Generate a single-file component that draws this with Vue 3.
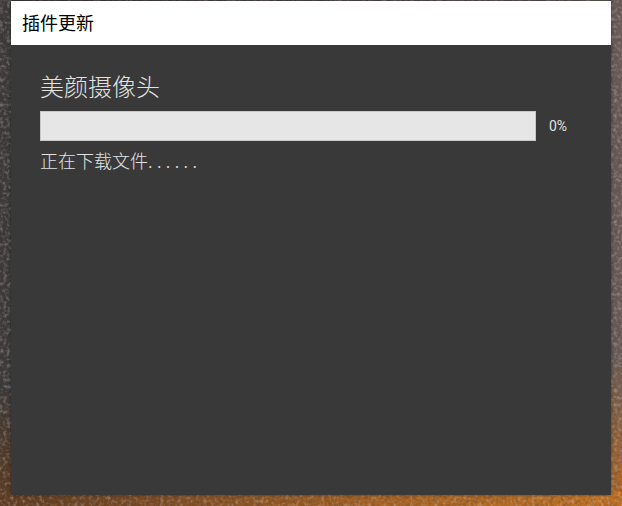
<script setup>
const percent = 0
</script>

<template>
  <div class="desktop">
    <svg class="grain" aria-hidden="true">
      <filter id="grain-filter">
        <feTurbulence type="fractalNoise" baseFrequency="0.28" numOctaves="2" seed="7" />
        <feColorMatrix type="matrix" values="0 0 0 0 0.08  0 0 0 0 0.06  0 0 0 0 0.06  2.4 0 0 0 -0.9" />
      </filter>
      <filter id="light-filter">
        <feTurbulence type="fractalNoise" baseFrequency="0.28" numOctaves="2" seed="13" />
        <feColorMatrix type="matrix" values="0 0 0 0 0.6  0 0 0 0 0.56  0 0 0 0 0.54  2.4 0 0 0 -1.1" />
      </filter>
      <rect width="100%" height="100%" filter="url(#grain-filter)" />
      <rect width="100%" height="100%" filter="url(#light-filter)" />
    </svg>
    <section class="dialog">
      <header class="dialog-header">插件更新</header>
      <div class="dialog-body">
        <h1 class="plugin-name">美颜摄像头</h1>
        <div class="progress-row">
          <div class="progress-track">
            <div class="progress-fill" :style="{ width: percent + '%' }"></div>
          </div>
          <span class="progress-value">{{ percent }}%</span>
        </div>
        <p class="status">正在下载文件<span class="dots">......</span></p>
      </div>
    </section>
  </div>
</template>

<style>
html, body { margin: 0; padding: 0; }
</style>

<style scoped>
.desktop {
  position: relative;
  box-sizing: border-box;
  width: 622px;
  height: 506px;
  padding: 1px 11px 11px;
  overflow: hidden;
  background:
    linear-gradient(to right, #5e3a1e 0, #7d4a20 25%, #a8621f 60%, #c4721f 100%) 0 100% / 100% 14px no-repeat,
    linear-gradient(to bottom, rgba(150, 95, 40, 0) 0, #b8691f 100%) 100% 100% / 14px 150px no-repeat,
    linear-gradient(to bottom, rgba(90, 55, 30, 0) 0, #5e3a1e 100%) 0 100% / 14px 120px no-repeat,
    linear-gradient(to right, #3a3838 0, #3a3838 4%, #5c5250 90%, #6a5c58 100%);
  font-family: "Noto Sans CJK SC", "Liberation Sans", sans-serif;
}
.grain {
  position: absolute;
  inset: 0;
  width: 100%;
  height: 100%;
  opacity: 0.4;
}
.dialog {
  position: relative;
  display: flex;
  flex-direction: column;
  width: 600px;
  height: 494px;
  background: #393939;
  box-shadow: 0 0 3px rgba(0, 0, 0, 0.45);
}
.dialog-header {
  flex: none;
  box-sizing: border-box;
  height: 44px;
  padding: 8px 0 0 11px;
  background: #fff;
  color: #000;
  font-size: 18px;
  line-height: 26px;
}
.dialog-body {
  flex: 1;
  display: flex;
  flex-direction: column;
  padding: 26px 29px 0;
  color: #e2e2e2;
  font-weight: 300;
}
.plugin-name {
  margin: 0 0 10px;
  height: 30px;
  font-size: 24px;
  line-height: 30px;
  font-weight: 300;
}
.progress-row {
  display: flex;
  align-items: center;
  gap: 13px;
}
.progress-track {
  box-sizing: border-box;
  width: 496px;
  height: 30px;
  border: 1px solid #c8c8c8;
  background: #e6e6e6;
}
.progress-fill {
  height: 100%;
  background: #4a90d9;
}
.progress-value {
  font-size: 14px;
  font-family: Roboto, "Liberation Sans", sans-serif;
  font-weight: 400;
}
.status {
  margin: 6px 0 0;
  font-size: 18px;
  line-height: 26px;
}
.dots {
  letter-spacing: 4.4px;
}
</style>
